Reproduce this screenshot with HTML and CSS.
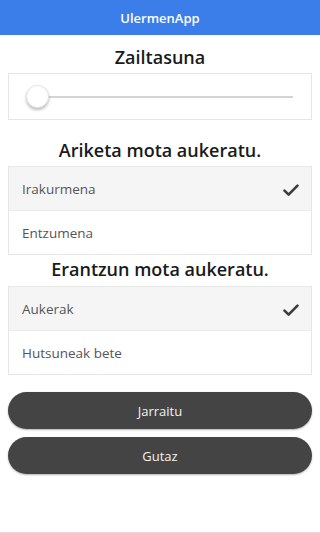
FILE: index.html
```html
<!DOCTYPE html>
<html>
<head>
<meta charset="utf-8">
<link rel="stylesheet" href="styles.css">
</head>
<body>
<div class="app">
  <header class="topbar">UlermenApp</header>
  <main class="content">
    <h2 class="heading first">Zailtasuna</h2>
    <div class="slider-box">
      <div class="slider">
        <div class="track"></div>
        <div class="thumb"></div>
      </div>
    </div>
    <h2 class="heading mid">Ariketa mota aukeratu.</h2>
    <ul class="list">
      <li class="row selected"><span>Irakurmena</span>
        <svg class="check" viewBox="0 0 16 16" width="16" height="16"><path d="M1.5 8.6 L5.6 12.6 L14.5 3.6" fill="none" stroke="#3c3c3c" stroke-width="2.6" stroke-linecap="round" stroke-linejoin="round"/></svg>
      </li>
      <li class="row"><span>Entzumena</span></li>
    </ul>
    <h2 class="heading second">Erantzun mota aukeratu.</h2>
    <ul class="list">
      <li class="row selected"><span>Aukerak</span>
        <svg class="check" viewBox="0 0 16 16" width="16" height="16"><path d="M1.5 8.6 L5.6 12.6 L14.5 3.6" fill="none" stroke="#3c3c3c" stroke-width="2.6" stroke-linecap="round" stroke-linejoin="round"/></svg>
      </li>
      <li class="row"><span>Hutsuneak bete</span></li>
    </ul>
    <div class="buttons">
      <button class="btn">Jarraitu</button>
      <button class="btn">Gutaz</button>
    </div>
  </main>
</div>
</body>
</html>
```
FILE: styles.css
```css
* { box-sizing: border-box; }
html, body { margin: 0; padding: 0; overflow: hidden; }
body {
  background: #fff;
  font-family: "Open Sans", "Noto Sans", sans-serif;
}
.app {
  height: 100vh;
  border-bottom: 1px solid #dcdcdc;
  display: flex;
  flex-direction: column;
}
.topbar {
  height: 35px;
  background: #3b7ee9;
  color: #fff;
  font-weight: 600;
  font-size: 13px;
  display: flex;
  align-items: center;
  justify-content: center;
}
.content {
  padding: 0 8px;
  display: flex;
  flex-direction: column;
}
.heading {
  margin: 0;
  text-align: center;
  font-size: 18px;
  font-weight: 600;
  color: #1a1a1a;
  line-height: 26px;
}
.heading.first { margin-top: 9px; margin-bottom: 3px; }
.slider-box {
  height: 47px;
  border: 1px solid #e6e6e6;
  display: flex;
  align-items: center;
  padding: 0 18px 0 17px;
}
.slider {
  position: relative;
  flex: 1;
  height: 24px;
}
.track {
  position: absolute;
  left: 10px;
  right: 0;
  top: 11px;
  height: 2px;
  background: #d4d4d4;
}
.thumb {
  position: absolute;
  left: 0;
  top: 0;
  width: 23px;
  height: 23px;
  border-radius: 50%;
  background: #fff;
  border: 1px solid #e4e4e4;
  box-shadow: 0 2px 3px rgba(0,0,0,0.25);
}
.heading.mid { margin-top: 17px; margin-bottom: 3px; }
.heading.second { margin-top: 1px; margin-bottom: 4px; }
.list {
  list-style: none;
  margin: 0;
  padding: 0;
  border: 1px solid #e6e6e6;
}
.row {
  height: 43px;
  display: flex;
  align-items: center;
  justify-content: space-between;
  padding: 0 12px 0 13px;
  font-size: 13.5px;
  color: #555;
  background: #fff;
}
.row + .row { border-top: 1px solid #ececec; height: 44px; }
.row.selected { background: #f5f5f5; }
.check { margin-top: 2px; }
.buttons {
  margin-top: 17px;
  display: flex;
  flex-direction: column;
  gap: 8px;
}
.btn {
  height: 37px;
  border: none;
  border-radius: 19px;
  background: #444;
  color: #f2f2f2;
  font-family: "Open Sans", "Noto Sans", sans-serif;
  font-size: 13px;
  box-shadow: 0 1px 2px rgba(0,0,0,0.3);
}
```
